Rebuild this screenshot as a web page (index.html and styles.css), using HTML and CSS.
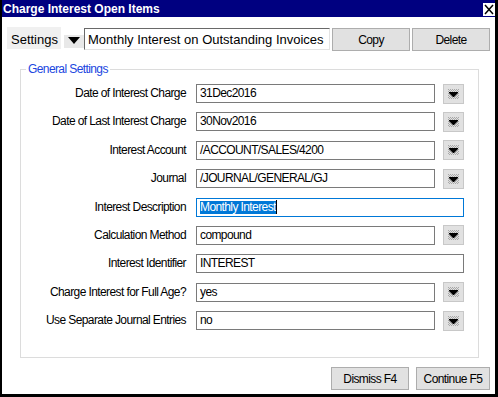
FILE: index.html
```html
<!DOCTYPE html>
<html lang="en">
<head>
  <meta charset="UTF-8">
  <title>Charge Interest Open Items</title>
  <link rel="stylesheet" href="styles.css">
</head>
<body>
<div class="window">
  <div class="titlebar">
    <span class="title">Charge Interest Open Items</span>
    <span class="close">
      <svg width="12" height="13" viewBox="0 0 12 13"><path d="M2 2 L10 11 M10 2 L2 11" stroke="#000" stroke-width="1.5" fill="none"/></svg>
    </span>
  </div>

  <div class="settings-row">
    <span class="settings-label">Settings</span>
    <span class="settings-drop">
      <svg width="20" height="13" viewBox="0 0 20 13"><path d="M4 2 L16 2 L10 9 Z" fill="#000"/></svg>
    </span>
    <div class="settings-input">Monthly Interest on Outstanding Invoices</div>
    <button class="button">Copy</button>
    <button class="button">Delete</button>
  </div>

  <fieldset class="group">
    <legend>General Settings</legend>
    <div class="form">
      <label class="label">Date of Interest Charge</label>
      <div class="field">31Dec2016</div>
      <span class="drop"><svg width="19" height="18" viewBox="0 0 19 18"><rect x="4" y="4" width="11" height="10" fill="url(#dots)"/><path d="M5 7 H14 V8 L10 12 H9 L5 8 Z" fill="#000"/></svg></span>

      <label class="label">Date of Last Interest Charge</label>
      <div class="field">30Nov2016</div>
      <span class="drop"><svg width="19" height="18" viewBox="0 0 19 18"><rect x="4" y="4" width="11" height="10" fill="url(#dots)"/><path d="M5 7 H14 V8 L10 12 H9 L5 8 Z" fill="#000"/></svg></span>

      <label class="label">Interest Account</label>
      <div class="field">/ACCOUNT/SALES/4200</div>
      <span class="drop"><svg width="19" height="18" viewBox="0 0 19 18"><rect x="4" y="4" width="11" height="10" fill="url(#dots)"/><path d="M5 7 H14 V8 L10 12 H9 L5 8 Z" fill="#000"/></svg></span>

      <label class="label">Journal</label>
      <div class="field">/JOURNAL/GENERAL/GJ</div>
      <span class="drop"><svg width="19" height="18" viewBox="0 0 19 18"><rect x="4" y="4" width="11" height="10" fill="url(#dots)"/><path d="M5 7 H14 V8 L10 12 H9 L5 8 Z" fill="#000"/></svg></span>

      <label class="label">Interest Description</label>
      <div class="field field-wide field-focus"><span class="selected">Monthly Interest</span><span class="caret"></span></div>

      <label class="label">Calculation Method</label>
      <div class="field">compound</div>
      <span class="drop"><svg width="19" height="18" viewBox="0 0 19 18"><rect x="4" y="4" width="11" height="10" fill="url(#dots)"/><path d="M5 7 H14 V8 L10 12 H9 L5 8 Z" fill="#000"/></svg></span>

      <label class="label">Interest Identifier</label>
      <div class="field field-wide">INTEREST</div>

      <label class="label">Charge Interest for Full Age?</label>
      <div class="field">yes</div>
      <span class="drop"><svg width="19" height="18" viewBox="0 0 19 18"><rect x="4" y="4" width="11" height="10" fill="url(#dots)"/><path d="M5 7 H14 V8 L10 12 H9 L5 8 Z" fill="#000"/></svg></span>

      <label class="label">Use Separate Journal Entries</label>
      <div class="field">no</div>
      <span class="drop"><svg width="19" height="18" viewBox="0 0 19 18"><rect x="4" y="4" width="11" height="10" fill="url(#dots)"/><path d="M5 7 H14 V8 L10 12 H9 L5 8 Z" fill="#000"/></svg></span>
    </div>
  </fieldset>

  <div class="footer">
    <button class="button button-dismiss">Dismiss F4</button>
    <button class="button button-continue">Continue F5</button>
  </div>
</div>

<svg class="defs" width="0" height="0">
  <defs>
    <pattern id="dots" width="2" height="2" patternUnits="userSpaceOnUse">
      <rect width="1" height="1" fill="#a8a8a8"/>
      <rect x="1" y="1" width="1" height="1" fill="#a8a8a8"/>
    </pattern>
  </defs>
</svg>
</body>
</html>
```

FILE: styles.css
```css
html, body {
    margin: 0;
    padding: 0;
    background: #fff;
}

.window {
    width: 498px;
    height: 397px;
    box-sizing: border-box;
    border-left: 2px solid #000;
    border-right: 3px solid #000;
    border-bottom: 3px solid #000;
    background: #fff;

    font-family: "Liberation Sans", Arial, sans-serif;
    font-size: 12px;
    letter-spacing: -0.6px;
    color: #000;
}

.titlebar {
    height: 17px;
    padding-left: 1px;
    background: #000080;
    color: #fff;

    display: flex;
    align-items: flex-start;
    justify-content: space-between;
    overflow: hidden;
}

.title {
    font-size: 12px;
    font-weight: bold;
    line-height: 18px;
    letter-spacing: 0;
}

.close {
    width: 12px;
    height: 13px;
    margin-top: 3px;
    background: #fff;
    display: flex;
}

/* settings row */

.settings-row {
    margin-top: 10px;
    padding-left: 5px;

    display: flex;
    align-items: flex-start;
}

.settings-label {
    width: 54px;
    height: 22px;
    box-sizing: border-box;
    padding: 4px 0 0 4px;
    font-size: 13px;
    letter-spacing: 0;
    line-height: 18px;
    background: #f0f0f0;
}

.settings-drop {
    width: 20px;
    height: 13px;
    margin: 8px 0 0 3px;
    background: #e8e8e8;
    display: flex;
}

.settings-input {
    width: 246px;
    height: 22px;
    box-sizing: border-box;
    margin-top: 1px;
    padding: 2px 0 0 3px;
    font-size: 13px;
    letter-spacing: 0;
    line-height: 18px;
    white-space: nowrap;
    overflow: hidden;
    border-top: 1px solid #696969;
    border-left: 1px solid #696969;
    border-right: 1px solid #e3e3e3;
    border-bottom: 1px solid #e3e3e3;
}

.button {
    height: 23px;
    padding: 0;
    border: 1px solid #adadad;
    background: #e1e1e1;
    font-family: inherit;
    font-size: 12px;
    letter-spacing: -0.6px;
    color: #000;
}

.settings-row .button {
    width: 78px;
    margin: 1px 0 0 2px;
}

/* group box */

.group {
    width: 459px;
    box-sizing: border-box;
    margin: 12px 0 0 18px;
    padding: 8px 0 27px 0;
    border: 1px solid #dcdcdc;
}

.group legend {
    margin-left: 5px;
    padding: 0 2px;
    line-height: 13px;
    color: #2046e0;
}

.form {
    display: grid;
    grid-template-columns: 167px 239px 21px;
    grid-auto-rows: 19px;
    column-gap: 8px;
    row-gap: 9.4px;
    align-items: center;
}

.label {
    padding-right: 2px;
    text-align: right;
    line-height: 19px;
    white-space: nowrap;
}

.field {
    height: 19px;
    box-sizing: border-box;
    padding-left: 3px;
    border: 1px solid #7a7a7a;
    line-height: 17px;
    white-space: nowrap;
    overflow: hidden;
    display: flex;
    align-items: center;
}

.field-wide {
    grid-column: span 2;
}

.field-focus {
    border-color: #0078d7;
}

.selected {
    height: 13px;
    line-height: 13px;
    background: #0078d7;
    color: #fff;
}

.caret {
    width: 1px;
    height: 14px;
    background: #000;
}

.drop {
    width: 21px;
    height: 20px;
    box-sizing: border-box;
    border: 1px solid #c8c8c8;
    background: #e1e1e1;
    display: flex;
}

.defs {
    position: absolute;
}

/* footer */

.footer {
    margin-top: 9px;
    padding-right: 5px;

    display: flex;
    justify-content: flex-end;
    gap: 7px;
}

.button-dismiss {
    width: 78px;
}

.button-continue {
    width: 74px;
}
```
